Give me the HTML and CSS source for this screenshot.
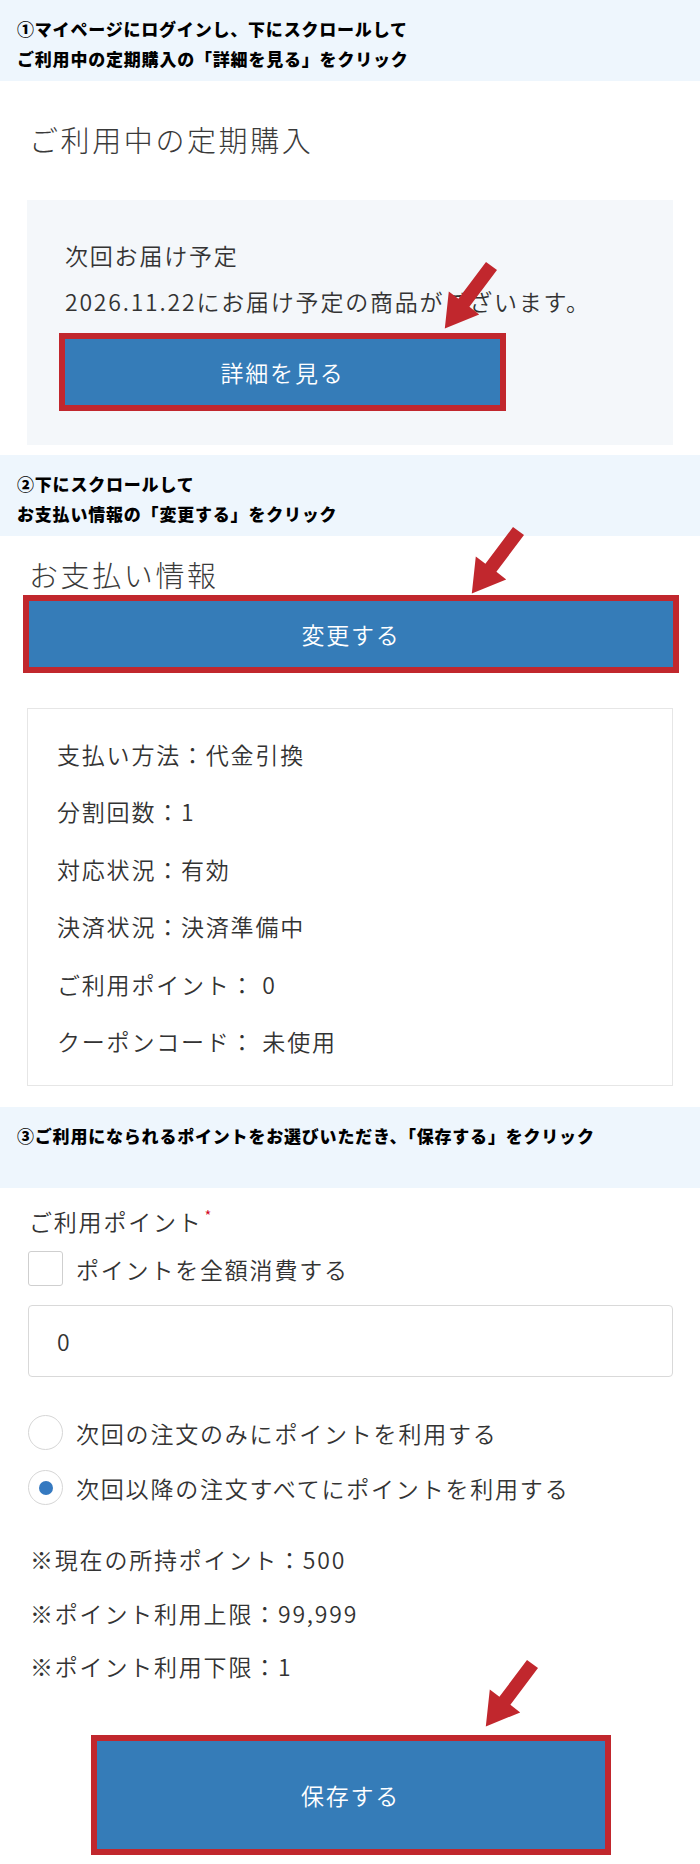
FILE: index.html
```html
<!DOCTYPE html>
<html lang="ja">
<head>
  <meta charset="UTF-8">
  <meta name="viewport" content="width=device-width, initial-scale=1.0">
  <title>定期購入 ポイント利用の設定方法</title>
  <link rel="stylesheet" href="styles.css">
</head>
<body>

  <!-- 手順1 -->
  <div class="step">
    <p>①マイページにログインし、下にスクロールして</p>
    <p>ご利用中の定期購入の「詳細を見る」をクリック</p>
  </div>

  <section class="block">
    <h2 class="title">ご利用中の定期購入</h2>
    <div class="next-box">
      <p>次回お届け予定</p>
      <p>2026.11.22にお届け予定の商品がございます。</p>
      <div class="mark mark-detail">
        <a href="#" class="btn btn-detail">詳細を見る</a>
        <svg class="arrow" width="64" height="74" viewBox="0 0 64 74"><polygon points="47,4 58,12 30.4,48.8 40.2,56.4 5.8,70.6 9.8,33.6 19.4,40.8"/></svg>
      </div>
    </div>
  </section>

  <!-- 手順2 -->
  <div class="step step-2">
    <p>②下にスクロールして</p>
    <p>お支払い情報の「変更する」をクリック</p>
  </div>

  <section class="block">
    <h2 class="title title-pay">お支払い情報</h2>
    <div class="mark mark-change">
      <a href="#" class="btn btn-change">変更する</a>
      <svg class="arrow" width="64" height="74" viewBox="0 0 64 74"><polygon points="47,4 58,12 30.4,48.8 40.2,56.4 5.8,70.6 9.8,33.6 19.4,40.8"/></svg>
    </div>

    <div class="pay-info">
      <p>支払い方法：代金引換</p>
      <p>分割回数：1</p>
      <p>対応状況：有効</p>
      <p>決済状況：決済準備中</p>
      <p>ご利用ポイント： 0</p>
      <p>クーポンコード： 未使用</p>
    </div>
  </section>

  <!-- 手順3 -->
  <div class="step step-3">
    <p>③ご利用になられるポイントをお選びいただき、「保存する」をクリック</p>
  </div>

  <section class="block form">
    <p class="label">ご利用ポイント<span class="req">*</span></p>

    <label class="check-row">
      <span class="check"></span>
      ポイントを全額消費する
    </label>

    <input type="text" class="point-input" value="0">

    <label class="radio-row first">
      <span class="radio"></span>
      次回の注文のみにポイントを利用する
    </label>
    <label class="radio-row">
      <span class="radio checked"></span>
      次回以降の注文すべてにポイントを利用する
    </label>

    <div class="notes">
      <p>※現在の所持ポイント：500</p>
      <p>※ポイント利用上限：99,999</p>
      <p>※ポイント利用下限：1</p>
    </div>

    <div class="mark mark-save">
      <a href="#" class="btn btn-save">保存する</a>
      <svg class="arrow" width="64" height="74" viewBox="0 0 64 74"><polygon points="47,4 58,12 30.4,48.8 40.2,56.4 5.8,70.6 9.8,33.6 19.4,40.8"/></svg>
    </div>
  </section>

</body>
</html>
```

FILE: styles.css
```css
/* Reset */
* {
  margin: 0;
  padding: 0;
  box-sizing: border-box;
}

body {
  font-family: "Noto Sans CJK JP", "Noto Sans", sans-serif;
  font-size: 23px;
  font-weight: 350;
  letter-spacing: 1.8px;
  color: #333;
  background: #fff;
  width: 700px;
  min-height: 1864px;
}

/* 手順の帯 */
.step {
  background-color: #eef6fd;
  height: 81px;
  padding: 14px 17px 0;
  font-size: 17px;
  font-weight: 900;
  line-height: 30px;
  letter-spacing: 0.8px;
  color: #000;
}

.step-2 { margin-top: 10px; }
.step-3 { margin-top: 21px; }

.block {
  padding: 0 27px;
}

/* 見出し */
.title {
  font-size: 29px;
  font-weight: 300;
  line-height: 40px;
  letter-spacing: 2.6px;
  color: #3a3a3a;
  padding-left: 2px;
  margin: 38px 0 41px;
}

.title-pay {
  margin: 18px 0 7px;
}

/* 次回お届け */
.next-box {
  background-color: #f4f7fa;
  padding: 32px 38px 40px;
  line-height: 46px;
}

/* 赤枠で囲んだボタン */
.mark {
  position: relative;
}

.btn {
  display: block;
  height: 66px;
  line-height: 66px;
  text-align: center;
  color: #fff;
  text-decoration: none;
  background-color: #357cb8;
  outline: 6px solid #c1272d;
}

.mark-detail {
  margin-top: 15px;
  width: 435px;
}

.mark-change {
  margin: 0 0 0 2px;
}

.arrow {
  position: absolute;
  overflow: visible;
  fill: #c1272d;
}

.mark-detail .arrow { left: 374px; top: -81px; }
.mark-change .arrow { left: 437px; top: -78px; }
.mark-save .arrow { left: 383px; top: -85px; }

/* お支払い情報 */
.pay-info {
  margin-top: 41px;
  border: 1px solid #e6e6e6;
  padding: 17px 29px 15px;
  line-height: 57.4px;
}

/* ポイント入力 */
.form {
  padding: 0 27px 0 28px;
}

.label {
  margin-top: 13px;
  line-height: 40px;
  padding-left: 1px;
}

.req {
  color: #d0021b;
  font-size: 15px;
  vertical-align: top;
  line-height: 30px;
  margin-left: 2px;
}

.check-row,
.radio-row {
  display: flex;
  align-items: center;
  gap: 13px;
  height: 35px;
}

.check-row {
  margin-top: 10px;
}

.check {
  width: 35px;
  height: 35px;
  border: 1px solid #cfcfcf;
  border-radius: 3px;
  background: #fff;
}

.point-input {
  display: block;
  width: 100%;
  height: 72px;
  margin-top: 19px;
  padding: 0 28px;
  font-family: inherit;
  font-size: 23px;
  font-weight: 350;
  letter-spacing: 1.8px;
  color: #333;
  border: 1px solid #d9d9d9;
  border-radius: 4px;
  background: #fff;
}

.radio-row.first {
  margin-top: 38px;
}

.radio-row + .radio-row {
  margin-top: 20px;
}

.radio {
  position: relative;
  width: 35px;
  height: 35px;
  border: 1.5px solid #d6d6d6;
  border-radius: 50%;
  background: #fff;
  flex-shrink: 0;
}

.radio.checked::after {
  content: "";
  position: absolute;
  top: 50%;
  left: 50%;
  width: 14px;
  height: 14px;
  margin: -7px 0 0 -7px;
  border-radius: 50%;
  background-color: #3579c0;
}

.notes {
  margin-top: 28px;
  line-height: 53.5px;
  padding-left: 2px;
}

.mark-save {
  width: 508px;
  margin: 47px auto 0;
}

.btn-save {
  height: 108px;
  line-height: 108px;
}
```
